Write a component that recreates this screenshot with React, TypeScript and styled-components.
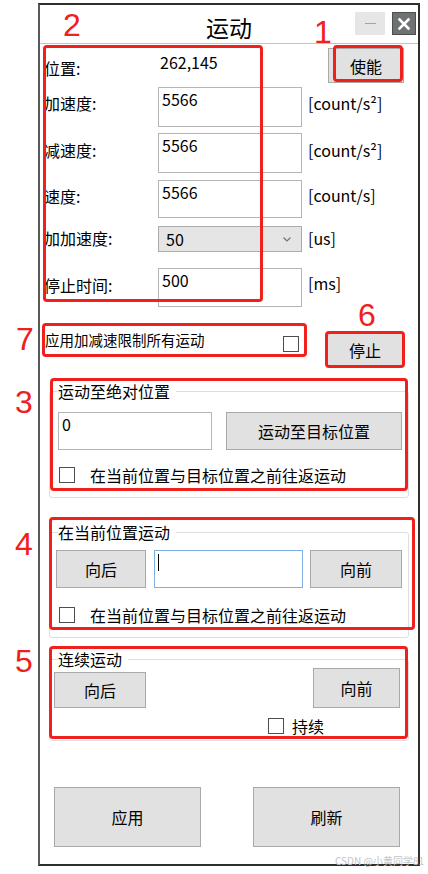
import React from 'react';
import styled, { createGlobalStyle } from 'styled-components';

const RED = '#f0201c';
const FONT = `"Noto Sans CJK SC", "Noto Sans", sans-serif`;

const GlobalStyle = createGlobalStyle`
  html, body {
    margin: 0;
    padding: 0;
    background: #fff;
  }
  body {
    font-family: ${FONT};
    color: #000;
  }
  * {
    box-sizing: border-box;
  }
`;

const Page = styled.div`
  position: relative;
  width: 428px;
  height: 874px;
  padding: 3px 0 0 38px;
  overflow: hidden;
`;

const Window = styled.div`
  display: flex;
  flex-direction: column;
  width: 382px;
  height: 863px;
  border: 2px solid #2e2e2e;
  border-left-color: #5a5a5a;
  background: #fff;
`;

const TitleBar = styled.div`
  display: grid;
  grid-template-columns: 1fr auto 1fr;
  height: 39px;
  border-bottom: 1px solid #b9c6d3;
`;

const Title = styled.div`
  grid-column: 2;
  padding-top: 7px;
  font-size: 23px;
  line-height: 30px;
`;

const Controls = styled.div`
  grid-column: 3;
  justify-self: end;
  display: flex;
  gap: 7px;
  margin: 7px 2px 0 0;
`;

const MinButton = styled.div`
  display: flex;
  align-items: center;
  justify-content: center;
  width: 30px;
  height: 23px;
  background: #e6e6e6;
  &::after {
    content: '';
    width: 11px;
    height: 1.5px;
    background: #a3a3a3;
  }
`;

const CloseButton = styled.div`
  display: flex;
  align-items: center;
  justify-content: center;
  width: 24px;
  height: 23px;
  background: #6e7273;
  border: 1px solid #4b4f50;
`;

const Annotated = styled.div`
  position: relative;
`;

const Frame = styled.div<{ $l: number; $t: number; $w: number; $h: number }>`
  position: absolute;
  left: ${(p) => p.$l}px;
  top: ${(p) => p.$t}px;
  width: ${(p) => p.$w}px;
  height: ${(p) => p.$h}px;
  border: 3px solid ${RED};
  border-radius: 4px;
  pointer-events: none;
`;

const Tag = styled.span<{ $l: number; $t: number }>`
  position: absolute;
  left: ${(p) => p.$l}px;
  top: ${(p) => p.$t}px;
  font-family: 'Liberation Sans', Arial, sans-serif;
  font-size: 32px;
  line-height: 32px;
  color: ${RED};
`;

const Params = styled(Annotated)`
  margin-top: 2px;
`;

const ParamRow = styled.div<{ $mt: number; $h: number }>`
  display: grid;
  grid-template-columns: 114px 144px 1fr;
  align-items: stretch;
  height: ${(p) => p.$h}px;
  margin-top: ${(p) => p.$mt}px;
  padding: 0 14px 0 4px;
`;

const Label = styled.span<{ $pt: number }>`
  padding-top: ${(p) => p.$pt}px;
  font-size: 16px;
  line-height: 20px;
  white-space: nowrap;
`;

const Unit = styled(Label)`
  padding-left: 6px;
`;

const Value = styled.span`
  padding: 6px 0 0 2px;
  font-size: 16px;
  line-height: 20px;
`;

const Field = styled.div<{ $w?: number; $focus?: boolean }>`
  display: flex;
  align-items: flex-start;
  width: ${(p) => (p.$w ? `${p.$w}px` : 'auto')};
  height: 100%;
  padding: 1px 3px;
  border: 1px solid ${(p) => (p.$focus ? '#7eaee2' : '#b5b5b5')};
  background: #fff;
  font-size: 16px;
  line-height: 20px;
`;

const Caret = styled.span`
  width: 1px;
  height: 17px;
  margin-top: 2px;
  background: #000;
`;

const Select = styled.div`
  display: flex;
  align-items: center;
  justify-content: space-between;
  height: 100%;
  padding: 0 10px 0 7px;
  border: 1px solid #acacac;
  background: #e5e5e5;
  font-size: 16px;
`;

const Button = styled.div<{ $w: number; $h: number }>`
  display: flex;
  align-items: center;
  justify-content: center;
  width: ${(p) => p.$w}px;
  height: ${(p) => p.$h}px;
  border: 1px solid #a9a9a9;
  background: #e1e1e1;
  font-size: 16px;
  line-height: 20px;
`;

const EnableWrap = styled(Annotated)`
  justify-self: end;
  margin-top: 2px;
`;

const LimitRow = styled.div`
  display: flex;
  justify-content: space-between;
  align-items: flex-start;
  height: 44px;
  margin-top: 16px;
  padding: 0 14px 0 2px;
`;

const LimitOption = styled(Annotated)`
  display: flex;
  justify-content: space-between;
  align-items: flex-start;
  width: 265px;
  height: 34px;
  padding: 0 8px 0 3px;
`;

const LimitText = styled.span`
  padding-top: 7px;
  font-size: 14.5px;
  line-height: 20px;
`;

const Box = styled.span<{ $mt?: number }>`
  flex: none;
  width: 16px;
  height: 16px;
  margin-top: ${(p) => p.$mt ?? 0}px;
  border: 1px solid #4d4d4d;
  background: #fff;
`;

const StopWrap = styled(Annotated)`
  margin-top: 9px;
`;

const Section = styled(Annotated)<{ $mt: number }>`
  width: 360px;
  margin: ${(p) => p.$mt}px 0 0 9px;
`;

const Group = styled.fieldset<{ $pl: number; $pr: number; $pb: number }>`
  min-width: 0;
  margin: 0;
  padding: 0 ${(p) => p.$pr}px ${(p) => p.$pb}px ${(p) => p.$pl}px;
  border: 1px solid #d9dfe5;
  border-radius: 3px;
`;

const Legend = styled.legend<{ $ml: number }>`
  margin-left: ${(p) => p.$ml}px;
  padding: 0 6px 0 0;
  font-size: 16px;
  line-height: 20px;
`;

const GroupRow = styled.div<{ $mt: number; $h: number; $align?: string }>`
  display: flex;
  justify-content: space-between;
  align-items: ${(p) => p.$align ?? 'stretch'};
  height: ${(p) => p.$h}px;
  margin-top: ${(p) => p.$mt}px;
`;

const CheckRow = styled.div<{ $mt: number; $pl: number; $gap: number }>`
  display: flex;
  align-items: center;
  gap: ${(p) => p.$gap}px;
  height: 18px;
  margin-top: ${(p) => p.$mt}px;
  padding-left: ${(p) => p.$pl}px;
  font-size: 16px;
  line-height: 20px;
`;

const Footer = styled.div`
  display: flex;
  justify-content: space-between;
  margin-top: auto;
  padding: 0 18px 17px 14px;
`;

const Watermark = styled.span`
  position: absolute;
  left: 335px;
  top: 855px;
  font-size: 10px;
  line-height: 12px;
  color: #c4c4c4;
  white-space: nowrap;
`;

const Chevron = () => (
  <svg width="8" height="5" viewBox="0 0 8 5">
    <polyline points="0.5,0.5 4,4 7.5,0.5" fill="none" stroke="#707070" strokeWidth="1.1" />
  </svg>
);

const CloseIcon = () => (
  <svg width="12" height="12" viewBox="0 0 12 12">
    <path d="M1.5 1.5 L10.5 10.5 M10.5 1.5 L1.5 10.5" stroke="#fff" strokeWidth="2.6" strokeLinecap="square" />
  </svg>
);

const App = () => {
  return (
    <Page>
      <GlobalStyle />
      <Window>
        <TitleBar>
          <Title>运动</Title>
          <Controls>
            <MinButton />
            <CloseButton>
              <CloseIcon />
            </CloseButton>
          </Controls>
        </TitleBar>

        <Params>
          <ParamRow $mt={0} $h={39}>
            <Label $pt={12}>位置:</Label>
            <Value>262,145</Value>
            <EnableWrap>
              <Button $w={76} $h={35}>使能</Button>
              <Frame $l={5} $t={-3} $w={70} $h={37} />
              <Tag $l={-14} $t={-32}>1</Tag>
            </EnableWrap>
          </ParamRow>
          <ParamRow $mt={2} $h={40}>
            <Label $pt={6}>加速度:</Label>
            <Field>5566</Field>
            <Unit $pt={6}>[count/s²]</Unit>
          </ParamRow>
          <ParamRow $mt={6} $h={40}>
            <Label $pt={7}>减速度:</Label>
            <Field>5566</Field>
            <Unit $pt={7}>[count/s²]</Unit>
          </ParamRow>
          <ParamRow $mt={7} $h={38}>
            <Label $pt={6}>速度:</Label>
            <Field>5566</Field>
            <Unit $pt={5}>[count/s]</Unit>
          </ParamRow>
          <ParamRow $mt={8} $h={26}>
            <Label $pt={2}>加加速度:</Label>
            <Select>
              <span>50</span>
              <Chevron />
            </Select>
            <Unit $pt={2}>[us]</Unit>
          </ParamRow>
          <ParamRow $mt={16} $h={39}>
            <Label $pt={7}>停止时间:</Label>
            <Field>500</Field>
            <Unit $pt={5}>[ms]</Unit>
          </ParamRow>
          <Frame $l={3} $t={-1} $w={220} $h={257} />
          <Tag $l={23} $t={-37}>2</Tag>
        </Params>

        <LimitRow>
          <LimitOption>
            <LimitText>应用加减速限制所有运动</LimitText>
            <Box $mt={13} />
            <Frame $l={0} $t={0} $w={265} $h={34} />
            <Tag $l={-26} $t={0}>7</Tag>
          </LimitOption>
          <StopWrap>
            <Button $w={78} $h={35}>停止</Button>
            <Frame $l={-1} $t={-1} $w={80} $h={37} />
            <Tag $l={32} $t={-33}>6</Tag>
          </StopWrap>
        </LimitRow>

        <Section $mt={14}>
          <Group $pl={8} $pr={6} $pb={13}>
            <Legend $ml={0}>运动至绝对位置</Legend>
            <GroupRow $mt={11} $h={38}>
              <Field $w={154}>0</Field>
              <Button $w={176} $h={38}>运动至目标位置</Button>
            </GroupRow>
            <CheckRow $mt={16} $pl={1} $gap={15}>
              <Box />
              <span>在当前位置与目标位置之前往返运动</span>
            </CheckRow>
          </Group>
          <Frame $l={1} $t={-3} $w={358} $h={113} />
          <Tag $l={-34} $t={5}>3</Tag>
        </Section>

        <Section $mt={24}>
          <Group $pl={6} $pr={6} $pb={13}>
            <Legend $ml={2}>在当前位置运动</Legend>
            <GroupRow $mt={8} $h={38}>
              <Button $w={90} $h={38}>向后</Button>
              <Field $w={149} $focus>
                <Caret />
              </Field>
              <Button $w={92} $h={38}>向前</Button>
            </GroupRow>
            <CheckRow $mt={18} $pl={3} $gap={15}>
              <Box />
              <span>在当前位置与目标位置之前往返运动</span>
            </CheckRow>
          </Group>
          <Frame $l={0} $t={-5} $w={366} $h={113} />
          <Tag $l={-34} $t={6}>4</Tag>
        </Section>

        <Section $mt={11}>
          <Group $pl={4} $pr={8} $pb={5}>
            <Legend $ml={4}>连续运动</Legend>
            <GroupRow $mt={-1} $h={40} $align="flex-end">
              <Button $w={92} $h={36}>向后</Button>
              <Button $w={87} $h={40}>向前</Button>
            </GroupRow>
            <CheckRow $mt={9} $pl={214} $gap={8}>
              <Box />
              <span>持续</span>
            </CheckRow>
          </Group>
          <Frame $l={0} $t={-3} $w={359} $h={93} />
          <Tag $l={-34} $t={-4}>5</Tag>
        </Section>

        <Footer>
          <Button $w={147} $h={60}>应用</Button>
          <Button $w={147} $h={60}>刷新</Button>
        </Footer>
      </Window>
      <Watermark>CSDN @小黄同学81</Watermark>
    </Page>
  );
};

export default App;
